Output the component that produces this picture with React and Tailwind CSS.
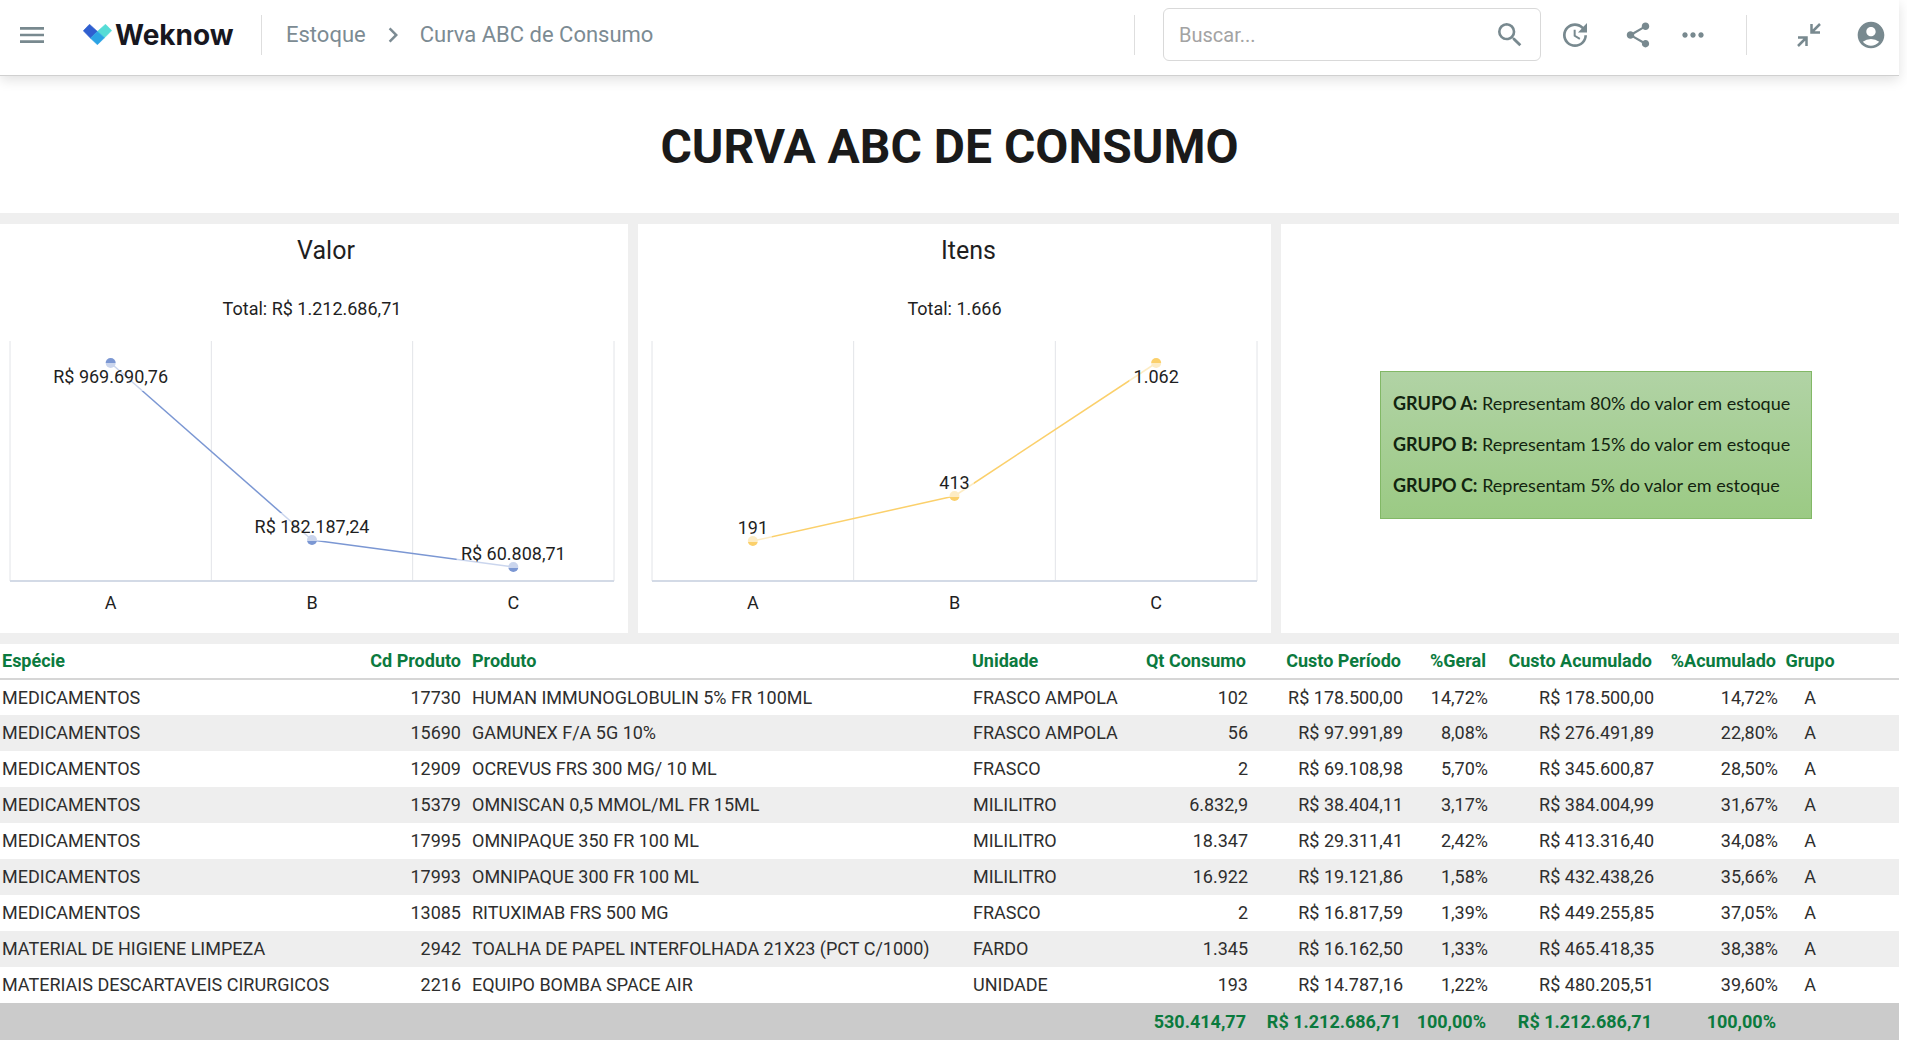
import React from "react";
import {
  MdMenu,
  MdChevronRight,
  MdSearch,
  MdUpdate,
  MdShare,
  MdMoreHoriz,
  MdAccountCircle,
} from "react-icons/md";

const PLOT_HEIGHT = 240;

const valor = {
  title: "Valor",
  total: "Total: R$ 1.212.686,71",
  line: "#7b97d3",
  padding: "pl-2.5 pr-3.5",
  points: [
    { name: "A", label: "R$ 969.690,76", y: 22, below: true },
    { name: "B", label: "R$ 182.187,24", y: 199 },
    { name: "C", label: "R$ 60.808,71", y: 226 },
  ],
};

const itens = {
  title: "Itens",
  total: "Total: 1.666",
  line: "#fbd06b",
  padding: "pl-3.5 pr-3.5",
  points: [
    { name: "A", label: "191", y: 200 },
    { name: "B", label: "413", y: 155 },
    { name: "C", label: "1.062", y: 22, below: true },
  ],
};

const columns = [
  { name: "Espécie", width: "w-[340px]", cell: "pl-0.5", head: "pl-0.5", total: "" },
  { name: "Cd Produto", width: "w-[127px]", cell: "text-right pr-1.5", head: "text-right pr-1.5", total: "" },
  { name: "Produto", width: "w-[500px]", cell: "pl-[5px]", head: "pl-[5px]", total: "" },
  { name: "Unidade", width: "w-[153px]", cell: "pl-1.5", head: "pl-[5px]", total: "" },
  { name: "Qt Consumo", width: "w-[134px]", cell: "text-right pr-1.5", head: "text-right pr-2", total: "530.414,77" },
  { name: "Custo Período", width: "w-[155px]", cell: "text-right pr-1.5", head: "text-right pr-2", total: "R$ 1.212.686,71" },
  { name: "%Geral", width: "w-[85px]", cell: "text-right pr-1.5", head: "text-right pr-2", total: "100,00%" },
  { name: "Custo Acumulado", width: "w-[166px]", cell: "text-right pr-1.5", head: "text-right pr-2", total: "R$ 1.212.686,71" },
  { name: "%Acumulado", width: "w-[124px]", cell: "text-right pr-1.5", head: "text-right pr-2", total: "100,00%" },
  { name: "Grupo", width: "w-[52px]", cell: "text-center", head: "text-center", total: "" },
];

const rows = [
  ["MEDICAMENTOS", "17730", "HUMAN IMMUNOGLOBULIN 5% FR 100ML", "FRASCO AMPOLA", "102", "R$ 178.500,00", "14,72%", "R$ 178.500,00", "14,72%", "A"],
  ["MEDICAMENTOS", "15690", "GAMUNEX F/A 5G 10%", "FRASCO AMPOLA", "56", "R$ 97.991,89", "8,08%", "R$ 276.491,89", "22,80%", "A"],
  ["MEDICAMENTOS", "12909", "OCREVUS FRS 300 MG/ 10 ML", "FRASCO", "2", "R$ 69.108,98", "5,70%", "R$ 345.600,87", "28,50%", "A"],
  ["MEDICAMENTOS", "15379", "OMNISCAN 0,5 MMOL/ML FR 15ML", "MILILITRO", "6.832,9", "R$ 38.404,11", "3,17%", "R$ 384.004,99", "31,67%", "A"],
  ["MEDICAMENTOS", "17995", "OMNIPAQUE 350 FR 100 ML", "MILILITRO", "18.347", "R$ 29.311,41", "2,42%", "R$ 413.316,40", "34,08%", "A"],
  ["MEDICAMENTOS", "17993", "OMNIPAQUE 300 FR 100 ML", "MILILITRO", "16.922", "R$ 19.121,86", "1,58%", "R$ 432.438,26", "35,66%", "A"],
  ["MEDICAMENTOS", "13085", "RITUXIMAB FRS 500 MG", "FRASCO", "2", "R$ 16.817,59", "1,39%", "R$ 449.255,85", "37,05%", "A"],
  ["MATERIAL DE HIGIENE LIMPEZA", "2942", "TOALHA DE PAPEL INTERFOLHADA 21X23 (PCT C/1000)", "FARDO", "1.345", "R$ 16.162,50", "1,33%", "R$ 465.418,35", "38,38%", "A"],
  ["MATERIAIS DESCARTAVEIS CIRURGICOS", "2216", "EQUIPO BOMBA SPACE AIR", "UNIDADE", "193", "R$ 14.787,16", "1,22%", "R$ 480.205,51", "39,60%", "A"],
];

const groups = [
  ["GRUPO A:", "Representam 80% do valor em estoque"],
  ["GRUPO B:", "Representam 15% do valor em estoque"],
  ["GRUPO C:", "Representam 5% do valor em estoque"],
];

function LogoMark() {
  return (
    <svg viewBox="0 0 29 21" className="h-[21px] w-[29px]" strokeWidth="0.6" strokeLinejoin="round" aria-hidden="true">
      <path d="M6.500 0.300 14.400 7.400 7.500 14.200 0.300 6.800Z" fill="#2f5fd0" stroke="#2f5fd0" />
      <path d="M22.500 0.300 28.700 6.600 21.500 13.800 14.400 7.400Z" fill="#56dcd6" stroke="#56dcd6" />
      <path d="M14.400 7.400 21.500 13.800 14.400 20.700 7.500 14.200Z" fill="#2ba3e4" stroke="#2ba3e4" />
    </svg>
  );
}

function CollapseIcon() {
  return (
    <svg viewBox="0 0 24 24" className="size-6" fill="none" stroke="currentColor" strokeWidth="2.500" aria-hidden="true">
      <path d="M14.500 1V9.500H23M14.500 9.500 23 1" />
      <path d="M1 14.500H9.500V23M9.500 14.500 1 23" />
    </svg>
  );
}

function IconButton({ label, children, className = "" }) {
  return (
    <button type="button" aria-label={label} className={`flex shrink-0 items-center justify-center ${className}`}>
      {children}
    </button>
  );
}

function Header() {
  return (
    <header className="relative flex h-[76px] items-center border-b border-[#d0d0d0] bg-white pb-1.5 text-[#78898f] shadow-[0_4px_12px_rgba(0,0,0,0.12)]">
      <IconButton label="Menu" className="ml-4">
        <MdMenu size={32} />
      </IconButton>
      <a href="#inicio" className="ml-[35px] flex w-[151px] items-center gap-[3px] font-[Inter,sans-serif] text-[28px] leading-8 font-bold text-[#17171f]">
        <LogoMark />
        Weknow
      </a>
      <div className="ml-[27px] h-10 w-px bg-[#dedede]" />
      <nav aria-label="Navegação" className="ml-6 flex items-center text-[22px] leading-7 text-[#7c8b93]">
        <a href="#estoque">Estoque</a>
        <MdChevronRight size={30} className="mx-3" aria-hidden="true" />
        <a href="#curva">Curva ABC de Consumo</a>
      </nav>
      <div className="ml-auto h-10 w-px bg-[#dedede]" />
      <label className="ml-7 flex h-[53px] w-[378px] items-center justify-between rounded-md border border-[#d9d9d9] pr-3.5 pl-[15px]">
        <input type="search" aria-label="Buscar" placeholder="Buscar..." className="min-w-0 flex-1 text-[20px] outline-none placeholder:text-[#a3a3a3]" />
        <MdSearch size={32} aria-hidden="true" />
      </label>
      <IconButton label="Atualizar" className="ml-[18px]">
        <MdUpdate size={32} />
      </IconButton>
      <IconButton label="Compartilhar" className="ml-8">
        <MdShare size={30} />
      </IconButton>
      <IconButton label="Mais opções" className="ml-6">
        <MdMoreHoriz size={32} />
      </IconButton>
      <div className="ml-[37px] h-10 w-px bg-[#dedede]" />
      <IconButton label="Sair da tela cheia" className="ml-[50px]">
        <CollapseIcon />
      </IconButton>
      <IconButton label="Conta" className="mr-3 ml-[34px]">
        <MdAccountCircle size={32} />
      </IconButton>
    </header>
  );
}

function LineChart({ chart }) {
  const xs = chart.points.map((_, i) => ((i + 0.5) * 100) / chart.points.length);
  return (
    <section className={`bg-white pt-[13px] ${chart.padding}`}>
      <h2 className="pl-7 text-center text-[25px] leading-7">{chart.title}</h2>
      <p className="mt-8 text-center text-[18px] leading-6">{chart.total}</p>
      <div className="relative mt-5">
        <svg className="block h-[240px] w-full overflow-visible" aria-hidden="true">
          {[0, 1, 2, 3].map((i) => (
            <line key={i} x1={`${(i * 100) / 3}%`} x2={`${(i * 100) / 3}%`} y1="0" y2={PLOT_HEIGHT} stroke="#e2e4e8" strokeWidth="1" />
          ))}
          <line x1="0" x2="100%" y1={PLOT_HEIGHT} y2={PLOT_HEIGHT} stroke="#d3dae6" strokeWidth="2" />
          {chart.points.slice(1).map((p, i) => (
            <line key={p.name} x1={`${xs[i]}%`} y1={chart.points[i].y} x2={`${xs[i + 1]}%`} y2={p.y} stroke={chart.line} strokeWidth="1.500" />
          ))}
          {chart.points.map((p, i) => (
            <circle key={p.name} cx={`${xs[i]}%`} cy={p.y} r="5" fill={chart.line} />
          ))}
        </svg>
        {chart.points.map((p, i) => (
          <span
            key={p.name}
            className="absolute -translate-x-1/2 -translate-y-1/2 bg-white/60 px-1 text-[18px] leading-7 whitespace-nowrap"
            style={{ left: `${xs[i]}%`, top: p.below ? p.y + 14 : p.y - 13 }}
          >
            {p.label}
          </span>
        ))}
      </div>
      <div className="mt-2 grid grid-cols-3 pb-4 text-center text-[18px] leading-7">
        {chart.points.map((p) => (
          <span key={p.name}>{p.name}</span>
        ))}
      </div>
    </section>
  );
}

function Legend() {
  return (
    <section className="flex items-center justify-center bg-white pt-8 pl-3">
      <div className="flex h-[148px] w-[432px] flex-col justify-center border border-[#82b866] bg-linear-to-b from-[#b1d3a5] to-[#9bca84] pl-3 font-[Lato,sans-serif] text-[18px] leading-[41px] text-[#12240f]">
        {groups.map(([name, text]) => (
          <p key={name} className="whitespace-nowrap">
            <strong>{name}</strong> {text}
          </p>
        ))}
      </div>
    </section>
  );
}

function ProductTable() {
  return (
    <table className="w-full table-fixed border-collapse bg-white text-left text-[18px] leading-6 whitespace-nowrap">
      <thead className="text-[#0b7a3e]">
        <tr className="h-[35px] border-b-2 border-[#d6d6d6]">
          {columns.map((c) => (
            <th key={c.name} scope="col" className={`p-0 font-bold ${c.width} ${c.head}`}>
              {c.name}
            </th>
          ))}
          <td />
        </tr>
      </thead>
      <tbody className="text-[#2e2e2e]">
        {rows.map((row) => (
          <tr key={row[1]} className="h-9 even:bg-[#eeeeee]">
            {row.map((value, i) => (
              <td key={columns[i].name} className={`p-0 ${columns[i].cell}`}>
                {value}
              </td>
            ))}
            <td />
          </tr>
        ))}
      </tbody>
      <tfoot className="bg-[#cbcbcb] font-bold text-[#0b7a3e]">
        <tr className="h-[37px]">
          {columns.map((c) => (
            <td key={c.name} className={`p-0 ${c.head}`}>
              {c.total}
            </td>
          ))}
          <td />
        </tr>
      </tfoot>
    </table>
  );
}

export default function App() {
  return (
    <div className="bg-white pr-2 pb-2.5 font-[Roboto,sans-serif] text-[#1f1f1f]">
      <Header />
      <main className="bg-[#efefef]">
        <h1 className="bg-white pt-[39px] pb-[34px] text-center text-[48px] leading-[64px] font-bold text-[#1a1a1a]">
          CURVA ABC DE CONSUMO
        </h1>
        <div className="grid grid-cols-[628fr_633fr_618fr] gap-[10px] py-[11px]">
          <LineChart chart={valor} />
          <LineChart chart={itens} />
          <Legend />
        </div>
        <ProductTable />
      </main>
    </div>
  );
}
